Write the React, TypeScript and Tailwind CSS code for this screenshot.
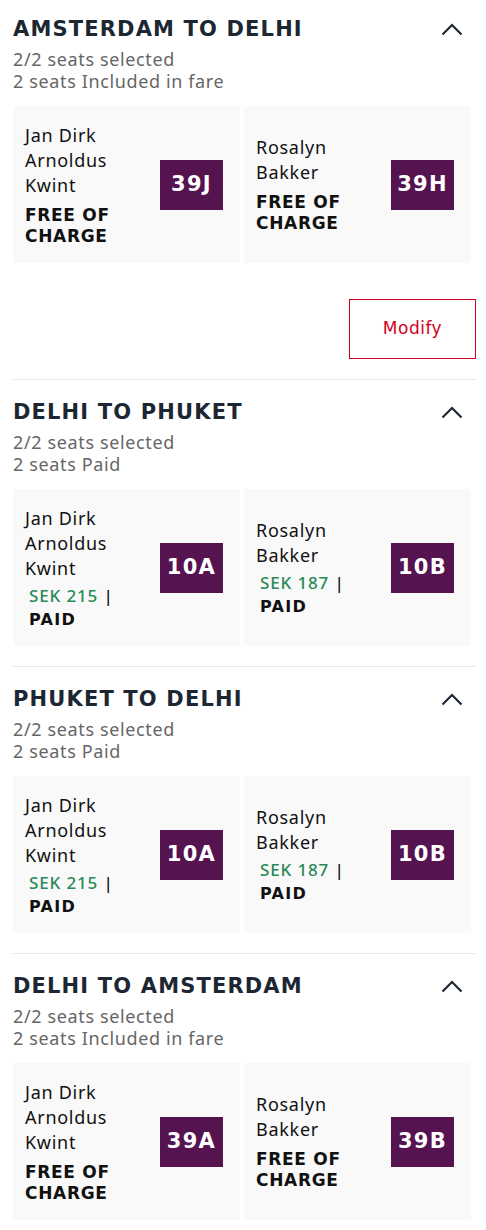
import React from 'react';

type Passenger = {
  name: string;
  seat: string;
  price?: string;
};

type Leg = {
  title: string;
  note: string;
  passengers: Passenger[];
  modify?: boolean;
};

const legs: Leg[] = [
  {
    title: 'AMSTERDAM TO DELHI',
    note: '2 seats Included in fare',
    modify: true,
    passengers: [
      { name: 'Jan Dirk Arnoldus Kwint', seat: '39J' },
      { name: 'Rosalyn Bakker', seat: '39H' },
    ],
  },
  {
    title: 'DELHI TO PHUKET',
    note: '2 seats Paid',
    passengers: [
      { name: 'Jan Dirk Arnoldus Kwint', seat: '10A', price: 'SEK 215' },
      { name: 'Rosalyn Bakker', seat: '10B', price: 'SEK 187' },
    ],
  },
  {
    title: 'PHUKET TO DELHI',
    note: '2 seats Paid',
    passengers: [
      { name: 'Jan Dirk Arnoldus Kwint', seat: '10A', price: 'SEK 215' },
      { name: 'Rosalyn Bakker', seat: '10B', price: 'SEK 187' },
    ],
  },
  {
    title: 'DELHI TO AMSTERDAM',
    note: '2 seats Included in fare',
    passengers: [
      { name: 'Jan Dirk Arnoldus Kwint', seat: '39A' },
      { name: 'Rosalyn Bakker', seat: '39B' },
    ],
  },
];

const display = "font-['DejaVu_Sans',_'Liberation_Sans',_sans-serif]";
const body = "font-['Noto_Sans',_'Open_Sans',_sans-serif]";

const ChevronUp = () => (
  <svg width="22" height="13" viewBox="0 0 22 13" fill="none" className="mr-[13px] flex-none">
    <path d="M1.5 11.5 L11 2 L20.5 11.5" stroke="#1c2733" strokeWidth="2.2" />
  </svg>
);

const SeatCard: React.FC<{ p: Passenger }> = ({ p }) => (
  <div className="flex h-[157px] items-center justify-between bg-[#f9f9f9] pl-[12px] pr-[17px]">
    <div className="w-[118px]">
      <p className={`${body} text-[18px] leading-[25px] tracking-[0.04em] text-[#111]`}>{p.name}</p>
      {p.price ? (
        <div className="pl-[4px]">
          <p className={`${body} mt-[3px] text-[17px] font-medium leading-[24px] tracking-[0.05em] text-[#111]`}>
            <span className="text-[#2a8a57]">{p.price}</span> |
          </p>
          <p className={`${display} mt-[2px] text-[16px] font-bold leading-[20px] tracking-[0.08em] text-[#111]`}>
            PAID
          </p>
        </div>
      ) : (
        <p className={`${display} mt-[7px] text-[17px] font-bold leading-[21px] tracking-[0.04em] text-[#111]`}>
          FREE OF CHARGE
        </p>
      )}
    </div>
    <div className="flex h-[50px] w-[63px] flex-none items-center justify-center bg-[#55134f]">
      <span className={`${display} text-[21px] font-bold tracking-[0.06em] text-white`}>{p.seat}</span>
    </div>
  </div>
);

const LegSection: React.FC<{ leg: Leg; first: boolean }> = ({ leg, first }) => (
  <section className={`${first ? 'pt-[15px]' : 'border-t border-[#e6e6e6] pt-[18px]'} pb-[20px]`}>
    <div className="flex items-center justify-between">
      <h2 className={`${display} text-[21px] font-bold leading-[28px] tracking-[0.055em] text-[#1c2733]`}>
        {leg.title}
      </h2>
      <ChevronUp />
    </div>
    <div className={`${body} mt-[5px] text-[18px] leading-[22px] tracking-[0.035em] text-[#666]`}>
      <p>2/2 seats selected</p>
      <p>{leg.note}</p>
    </div>
    <div className="mr-[5px] mt-[14px] grid grid-cols-2 gap-[4px]">
      {leg.passengers.map((p) => (
        <SeatCard key={p.seat} p={p} />
      ))}
    </div>
    {leg.modify && (
      <div className="mt-[36px] flex justify-end">
        <div
          className={`${display} flex h-[60px] w-[127px] items-center justify-center border border-solid border-[#d4001c] text-[17px] tracking-[0.03em] text-[#d4001c]`}
        >
          Modify
        </div>
      </div>
    )}
  </section>
);

export default function App() {
  return (
    <div className="min-h-[1230px] bg-white pl-[13px] pr-[10px]">
      {legs.map((leg, i) => (
        <LegSection key={leg.title} leg={leg} first={i === 0} />
      ))}
    </div>
  );
}
